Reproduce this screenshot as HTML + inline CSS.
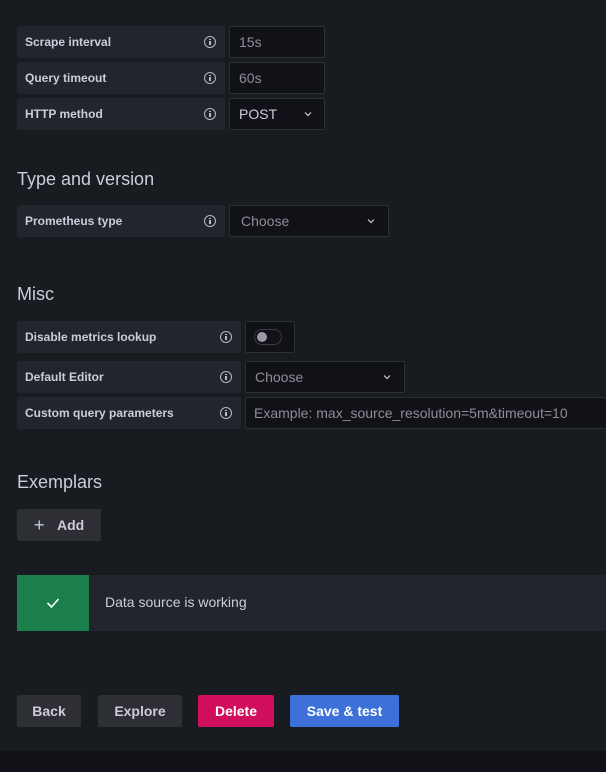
<!DOCTYPE html>
<html><head><style>
*{box-sizing:border-box;margin:0;padding:0}
body{width:606px;height:772px;background:#181b1f;font-family:"Liberation Sans",sans-serif;color:#ccccdc;position:relative;overflow:hidden}
.a{position:absolute}
.lab{background:#22252b;border-radius:2px;height:32px;font-size:12px;font-weight:bold;color:#ccccdc;padding-left:8px;line-height:32px}
.inp{background:#111217;border:1px solid #2c2f35;border-radius:2px;height:32px;font-size:14px;line-height:30px;padding-left:9px;color:#8e8e98}
.info{position:absolute;top:10px;width:12px;height:12px;border:1.3px solid #b8b8c4;border-radius:50%}
.info:before{content:"";position:absolute;left:4.2px;top:2px;width:1.4px;height:1.4px;background:#b8b8c4}
.info:after{content:"";position:absolute;left:4.2px;top:4.3px;width:1.4px;height:4px;background:#b8b8c4}
h3{position:absolute;font-size:18px;font-weight:normal;color:#ccccdc}
.chev{position:absolute;top:9px;font-size:10px;color:#ccccdc}
.btn{position:absolute;top:695px;height:32px;border-radius:2px;font-size:14px;font-weight:bold;line-height:32px;text-align:center}
</style></head><body>
<div class="a lab" style="left:17px;top:26px;width:208px">Scrape interval<span class="info" style="left:187px"></span></div>
<div class="a inp" style="left:229px;top:26px;width:96px">15s</div>
<div class="a lab" style="left:17px;top:62px;width:208px">Query timeout<span class="info" style="left:187px"></span></div>
<div class="a inp" style="left:229px;top:62px;width:96px">60s</div>
<div class="a lab" style="left:17px;top:98px;width:208px">HTTP method<span class="info" style="left:187px"></span></div>
<div class="a inp" style="left:229px;top:98px;width:96px;color:#ccccdc">POST<svg class="a" style="left:74px;top:12px" width="8" height="6"><path d="M1 1.5L4 4.5L7 1.5" stroke="#ccc" fill="none" stroke-width="1.2"/></svg></div>

<h3 style="left:17px;top:169px">Type and version</h3>
<div class="a lab" style="left:17px;top:205px;width:208px">Prometheus type<span class="info" style="left:187px"></span></div>
<div class="a inp" style="left:229px;top:205px;width:160px;padding-left:11px">Choose<svg class="a" style="left:137px;top:12px" width="8" height="6"><path d="M1 1.5L4 4.5L7 1.5" stroke="#ccc" fill="none" stroke-width="1.2"/></svg></div>

<h3 style="left:17px;top:284px">Misc</h3>
<div class="a lab" style="left:17px;top:321px;width:224px">Disable metrics lookup<span class="info" style="left:203px"></span></div>
<div class="a inp" style="left:245px;top:321px;width:50px"><div class="a" style="left:8px;top:7px;width:28px;height:16px;border:1px solid #3a3d44;border-radius:8px;background:#111217"></div><div class="a" style="left:11px;top:10px;width:10px;height:10px;border-radius:50%;background:#9a9aa6"></div></div>
<div class="a lab" style="left:17px;top:361px;width:224px">Default Editor<span class="info" style="left:203px"></span></div>
<div class="a inp" style="left:245px;top:361px;width:160px">Choose<svg class="a" style="left:137px;top:12px" width="8" height="6"><path d="M1 1.5L4 4.5L7 1.5" stroke="#ccc" fill="none" stroke-width="1.2"/></svg></div>
<div class="a lab" style="left:17px;top:397px;width:224px">Custom query parameters<span class="info" style="left:203px"></span></div>
<div class="a inp" style="left:245px;top:397px;width:370px;padding-left:8px;white-space:nowrap">Example: max_source_resolution=5m&amp;timeout=10</div>

<h3 style="left:17px;top:472px">Exemplars</h3>
<div class="a" style="left:17px;top:509px;width:84px;height:32px;background:#2d2f34;border-radius:2px;font-size:14px;font-weight:bold;line-height:32px;color:#ccccdc"><span style="position:absolute;left:17px;font-weight:normal;font-size:18px">+</span><span style="position:absolute;left:40px">Add</span></div>

<div class="a" style="left:17px;top:575px;width:589px;height:56px;background:#22252b"></div>
<div class="a" style="left:17px;top:575px;width:72px;height:56px;background:#1b7f4c"><svg class="a" style="left:29px;top:22px" width="14" height="12"><path d="M1.5 6L5.5 10L12.5 2" stroke="#fff" stroke-width="1.6" fill="none"/></svg></div>
<div class="a" style="left:105px;top:594px;font-size:14px;color:#ccccdc">Data source is working</div>

<div class="btn" style="left:17px;width:64px;background:#2d2f34;color:#ccccdc">Back</div>
<div class="btn" style="left:98px;width:84px;background:#2d2f34;color:#ccccdc">Explore</div>
<div class="btn" style="left:198px;width:76px;background:#d10e5c;color:#fff">Delete</div>
<div class="btn" style="left:290px;width:109px;background:#3d71d9;color:#fff">Save &amp; test</div>

<div class="a" style="left:0;top:751px;width:606px;height:21px;background:#111217"></div>
</body></html>
